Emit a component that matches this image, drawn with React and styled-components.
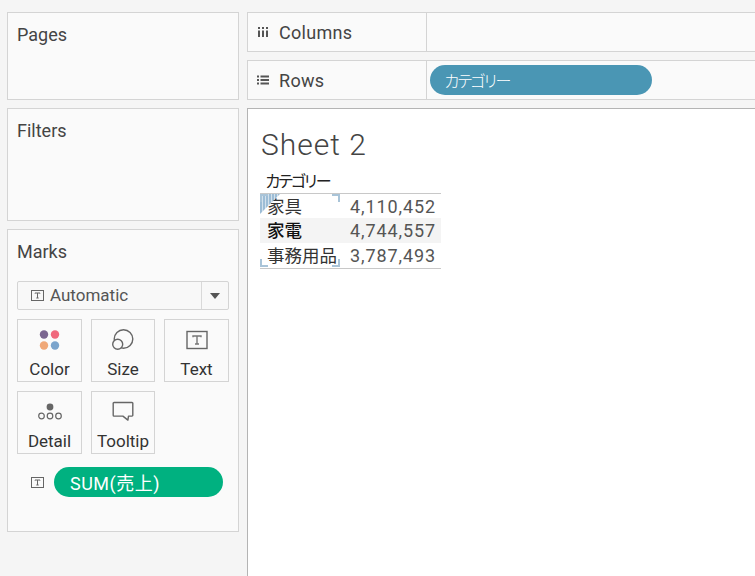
import React from 'react'
import styled, { createGlobalStyle } from 'styled-components'

const FONT = `Roboto, "Noto Sans CJK JP", sans-serif`
const CJK = `"Noto Sans CJK JP", "Noto Sans", sans-serif`

const GlobalStyle = createGlobalStyle`
    html, body { margin: 0; padding: 0; height: 100%; background: #f5f5f5; overflow: hidden; }
    #root { height: 100%; }
`

const Page = styled.div`
    width: 755px;
    height: 576px;
    display: flex;
    gap: 8px;
    padding: 12px 0 0 7px;
    box-sizing: border-box;
    font-family: ${FONT};
    color: #333;
    overflow: hidden;
`

const Side = styled.aside`
    width: 232px;
    flex: none;
    display: flex;
    flex-direction: column;
    gap: 8px;
`

const Panel = styled.section`
    height: ${props => props.$h}px;
    box-sizing: border-box;
    background: #fafafa;
    border: 1px solid #d4d4d4;
    padding: 10px 9px;
`

const PanelTitle = styled.h2`
    margin: 0;
    font-size: 18px;
    line-height: 23px;
    font-weight: 400;
    color: #444;
`

const MarkSelect = styled.div`
    margin-top: 18px;
    height: 29px;
    box-sizing: border-box;
    display: flex;
    align-items: center;
    border: 1px solid #d4d4d4;
    border-radius: 2px;
    background: #f8f8f8;
    padding-left: 13px;
    font-size: 17px;
    color: #555;
    & span { margin: -2px 0 0 6px; flex: 1; }
`

const Caret = styled.i`
    width: 26px;
    height: 100%;
    flex: none;
    display: flex;
    align-items: center;
    justify-content: center;
    border-left: 1px solid #d9d9d9;
    &::after {
        content: "";
        border-left: 5px solid transparent;
        border-right: 5px solid transparent;
        border-top: 6px solid #555;
    }
`

const CardGrid = styled.div`
    margin-top: 9px;
    display: grid;
    grid-template-columns: 65px 64px 65px;
    grid-auto-rows: 63px;
    column-gap: 9px;
    row-gap: 9px;
`

const Card = styled.div`
    box-sizing: border-box;
    border: 1px solid #d4d4d4;
    background: #fafafa;
    display: flex;
    flex-direction: column;
    align-items: center;
    font-size: 17px;
    color: #333;
    & svg { margin-top: 9px; height: 22px; flex: none; }
    & span { margin-top: 8px; line-height: 20px; }
`

const FieldRow = styled.div`
    margin-top: 13px;
    padding-left: 14px;
    display: flex;
    align-items: center;
    gap: 10px;
`

const Pill = styled.div`
    height: 30px;
    width: ${props => props.$w}px;
    flex: none;
    box-sizing: border-box;
    border-radius: 15px;
    background: ${props => props.$bg};
    color: #fff;
    display: flex;
    align-items: center;
    padding-left: ${props => props.$pad}px;
`

const MeasurePill = styled(Pill)`
    font-family: ${FONT};
    font-size: 18px;
    letter-spacing: 0.5px;
`

const DimensionPill = styled(Pill)`
    font-family: ${CJK};
    font-size: 16px;
    font-weight: 300;
    letter-spacing: -3.1px;
`

const Main = styled.main`
    flex: 1;
    min-width: 0;
    display: flex;
    flex-direction: column;
    gap: 8px;
`

const Shelf = styled.div`
    height: 40px;
    flex: none;
    margin-right: -2px;
    box-sizing: border-box;
    display: flex;
    background: #fafafa;
    border: 1px solid #d4d4d4;
`

const ShelfLabel = styled.div`
    width: 179px;
    flex: none;
    box-sizing: border-box;
    display: flex;
    align-items: center;
    gap: 10px;
    padding-left: 9px;
    border-right: 1px solid #d4d4d4;
    font-size: 18px;
    letter-spacing: 0.3px;
    color: #444;
    & svg { flex: none; }
`

const ShelfBody = styled.div`
    flex: 1;
    display: flex;
    align-items: center;
    padding-left: 3px;
`

const Sheet = styled.div`
    flex: 1;
    margin-right: -2px;
    background: #fff;
    border: 1px solid #b4b4b4;
    border-bottom: none;
    padding: 17px 0 0 12px;
`

const SheetTitle = styled.h1`
    margin: 0 0 0 1px;
    font-size: 30px;
    line-height: 38px;
    font-weight: 300;
    color: #444;
    letter-spacing: 1px;
`

const TableHead = styled.div`
    width: 181px;
    height: 29px;
    box-sizing: border-box;
    padding: 2px 0 0 5px;
    margin-top: 1px;
    display: flex;
    align-items: center;
    border-bottom: 1px solid #c8c8c8;
    font-family: ${CJK};
    font-size: 16px;
    letter-spacing: -3.3px;
    color: #222;
`

const Table = styled.div`
    position: relative;
    width: 181px;
    border-bottom: 1px solid #c8c8c8;
`

const Row = styled.div`
    height: 25px;
    display: flex;
    align-items: center;
    justify-content: space-between;
    padding: 0 5px 0 7px;
    background: ${props => props.$hl ? '#f4f4f4' : 'transparent'};
    &:first-child { height: 24px; }
`

const RowName = styled.span`
    font-family: ${CJK};
    font-size: 17.5px;
    line-height: 22px;
    margin-top: -1px;
    color: ${props => props.$hl ? '#111' : '#333'};
    font-weight: ${props => props.$hl ? 500 : 400};
`

const RowValue = styled.span`
    font-size: 18px;
    letter-spacing: 0.9px;
    color: #555;
`

const Corner = styled.i`
    position: absolute;
    width: 6px;
    height: 6px;
    border: 0 solid #a9c4d8;
    top: ${props => props.$top ? '0' : 'auto'};
    bottom: ${props => props.$top ? 'auto' : '1px'};
    left: ${props => props.$left ? '0' : 'auto'};
    right: ${props => props.$left ? 'auto' : '101px'};
    border-top-width: ${props => props.$top ? '2px' : '0'};
    border-bottom-width: ${props => props.$top ? '0' : '2px'};
    border-left-width: ${props => props.$left ? '2px' : '0'};
    border-right-width: ${props => props.$left ? '0' : '2px'};
`

const Hatch = styled.i`
    position: absolute;
    top: 0;
    left: 0;
    width: 20px;
    height: 20px;
    clip-path: polygon(0 0, 100% 0, 0 100%);
    background: repeating-linear-gradient(90deg, #9dbdd6 0 2px, #d3e1ec 2px 3px);
`

const TextIcon = ({ size = 13 }) => (
    <svg width={size} height={size} viewBox="0 0 13 13" style={{ flex: 'none' }}>
        <rect x="0.5" y="1.5" width="12" height="10" fill="none" stroke="#666" />
        <path d="M4 4.5V4h5v.5M6.5 4v5M5.3 9h2.4" fill="none" stroke="#666" />
    </svg>
)

const ColorIcon = () => (
    <svg width="22" height="22" viewBox="0 0 22 22">
        <circle cx="5" cy="5.5" r="4.2" fill="#7b6690" />
        <circle cx="16" cy="5.5" r="4.2" fill="#f0697d" />
        <circle cx="5" cy="16.5" r="4.2" fill="#f0a878" />
        <circle cx="16" cy="16.5" r="4.2" fill="#7ba4cc" />
    </svg>
)

const SizeIcon = () => (
    <svg width="24" height="22" viewBox="0 0 24 22">
        <circle cx="12.5" cy="10" r="9.3" fill="none" stroke="#666" strokeWidth="1.4" />
        <circle cx="6.7" cy="15.3" r="5" fill="#fafafa" stroke="#666" strokeWidth="1.4" />
    </svg>
)

const BigTextIcon = () => (
    <svg width="22" height="22" viewBox="0 0 22 22">
        <rect x="1" y="2.5" width="20" height="17" fill="none" stroke="#666" strokeWidth="1.4" />
        <path d="M7 8.2V7h8v1.2M11 7v8M9 15h4" fill="none" stroke="#777" strokeWidth="1.4" />
    </svg>
)

const DetailIcon = () => (
    <svg width="24" height="22" viewBox="0 0 24 22">
        <circle cx="12" cy="6" r="3.4" fill="#666" />
        <circle cx="3.5" cy="15" r="2.8" fill="none" stroke="#666" strokeWidth="1.2" />
        <circle cx="12" cy="15" r="2.8" fill="none" stroke="#666" strokeWidth="1.2" />
        <circle cx="20.5" cy="15" r="2.8" fill="none" stroke="#666" strokeWidth="1.2" />
    </svg>
)

const TooltipIcon = () => (
    <svg width="22" height="22" viewBox="0 0 22 22">
        <path d="M2 1.5h18a.8.8 0 0 1 .8.8v12a.8.8 0 0 1-.8.8h-3.5l-.6 4-5-4H2a.8.8 0 0 1-.8-.8v-12a.8.8 0 0 1 .8-.8z" fill="none" stroke="#666" strokeWidth="1.4" strokeLinejoin="round" />
    </svg>
)

const ColumnsIcon = () => (
    <svg width="12" height="12" viewBox="0 0 12 12">
        <path d="M1 1h2v2H1zM5 1h2v2H5zM9 1h2v2H9z" fill="#555" />
        <path d="M1 4.5h2V11H1zM5 4.5h2V11H5zM9 4.5h2V11H9z" fill="#555" />
    </svg>
)

const RowsIcon = () => (
    <svg width="12" height="12" viewBox="0 0 12 12">
        <path d="M0 1.5h2v2H0zM0 5h2v2H0zM0 8.5h2v2H0z" fill="#555" />
        <path d="M3.5 1.5H12v2H3.5zM3.5 5H12v2H3.5zM3.5 8.5H12v2H3.5z" fill="#555" />
    </svg>
)

const cards = [
    { label: 'Color', icon: <ColorIcon /> },
    { label: 'Size', icon: <SizeIcon /> },
    { label: 'Text', icon: <BigTextIcon /> },
    { label: 'Detail', icon: <DetailIcon /> },
    { label: 'Tooltip', icon: <TooltipIcon /> },
]

const rows = [
    { name: '家具', value: '4,110,452' },
    { name: '家電', value: '4,744,557', hl: true },
    { name: '事務用品', value: '3,787,493' },
]

export default function App() {
    return (<>
        <GlobalStyle />
        <Page>
            <Side>
                <Panel $h={88}><PanelTitle>Pages</PanelTitle></Panel>
                <Panel $h={113}><PanelTitle>Filters</PanelTitle></Panel>
                <Panel $h={303}>
                    <PanelTitle>Marks</PanelTitle>
                    <MarkSelect>
                        <TextIcon />
                        <span>Automatic</span>
                        <Caret />
                    </MarkSelect>
                    <CardGrid>
                        {cards.map(c => (
                            <Card key={c.label}>
                                {c.icon}
                                <span>{c.label}</span>
                            </Card>
                        ))}
                    </CardGrid>
                    <FieldRow>
                        <TextIcon />
                        <MeasurePill $w={169} $bg="#00b180" $pad={16}>SUM(売上)</MeasurePill>
                    </FieldRow>
                </Panel>
            </Side>
            <Main>
                <Shelf>
                    <ShelfLabel><ColumnsIcon />Columns</ShelfLabel>
                    <ShelfBody />
                </Shelf>
                <Shelf>
                    <ShelfLabel><RowsIcon />Rows</ShelfLabel>
                    <ShelfBody>
                        <DimensionPill $w={222} $bg="#4a96b4" $pad={14}>カテゴリー</DimensionPill>
                    </ShelfBody>
                </Shelf>
                <Sheet>
                    <SheetTitle>Sheet 2</SheetTitle>
                    <TableHead>カテゴリー</TableHead>
                    <Table>
                        {rows.map(r => (
                            <Row key={r.name} $hl={r.hl}>
                                <RowName $hl={r.hl}>{r.name}</RowName>
                                <RowValue>{r.value}</RowValue>
                            </Row>
                        ))}
                        <Hatch />
                        <Corner $top $left />
                        <Corner $top />
                        <Corner $left />
                        <Corner />
                    </Table>
                </Sheet>
            </Main>
        </Page>
    </>)
}
